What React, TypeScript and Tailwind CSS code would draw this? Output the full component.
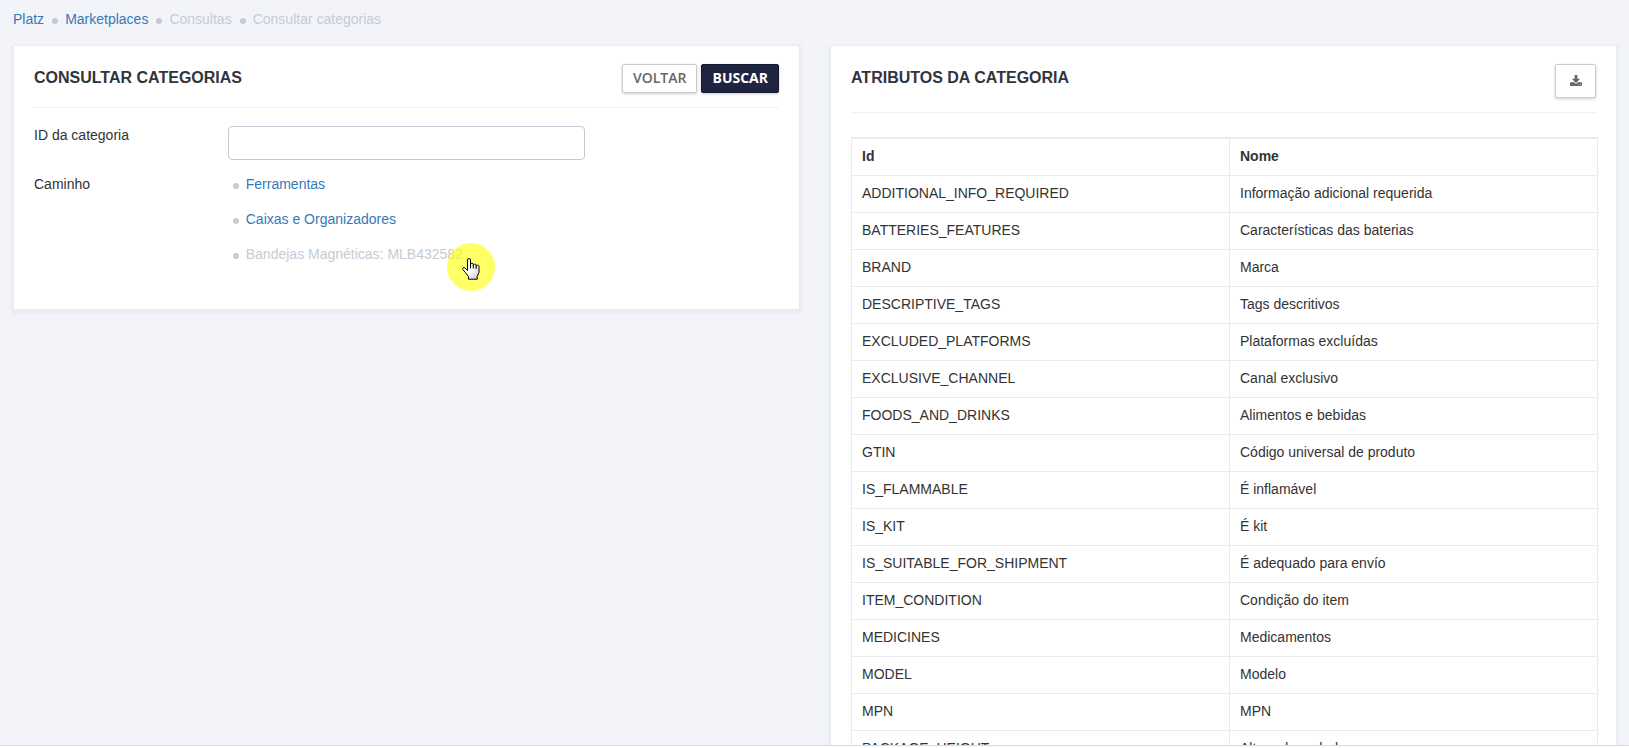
import React from "react";

const attributes: [string, string][] = [
  ["ADDITIONAL_INFO_REQUIRED", "Informação adicional requerida"],
  ["BATTERIES_FEATURES", "Características das baterias"],
  ["BRAND", "Marca"],
  ["DESCRIPTIVE_TAGS", "Tags descritivos"],
  ["EXCLUDED_PLATFORMS", "Plataformas excluídas"],
  ["EXCLUSIVE_CHANNEL", "Canal exclusivo"],
  ["FOODS_AND_DRINKS", "Alimentos e bebidas"],
  ["GTIN", "Código universal de produto"],
  ["IS_FLAMMABLE", "É inflamável"],
  ["IS_KIT", "É kit"],
  ["IS_SUITABLE_FOR_SHIPMENT", "É adequado para envío"],
  ["ITEM_CONDITION", "Condição do item"],
  ["MEDICINES", "Medicamentos"],
  ["MODEL", "Modelo"],
  ["MPN", "MPN"],
  ["PACKAGE_HEIGHT", "Altura da embalagem"],
];

function Dot() {
  return <span aria-hidden="true" className="mt-1 size-1.5 shrink-0 rounded-full bg-[#c5cbd6]" />;
}

function DownloadIcon() {
  return (
    <svg viewBox="0 0 1664 1536" className="h-[11px] w-3 fill-current" aria-hidden="true">
      <path d="M1280 1344q0-26-19-45t-45-19-45 19-19 45 19 45 45 19 45-19 19-45zm256 0q0-26-19-45t-45-19-45 19-19 45 19 45 45 19 45-19 19-45zm128-224v320q0 40-28 68t-68 28H96q-40 0-68-28t-28-68v-320q0-40 28-68t68-28h465l135 136q58 56 136 56t136-56l136-136h464q40 0 68 28t28 68zm-325-569q17 41-14 70l-448 448q-18 19-45 19t-45-19L339 621q-31-29-14-70 17-39 59-39h256V64q0-26 19-45t45-19h256q26 0 45 19t19 45v448h256q42 0 59 39z" />
    </svg>
  );
}

function PointerHighlight() {
  return (
    <span aria-hidden="true" className="pointer-events-none absolute -top-px -right-8 flex size-12 items-center justify-center rounded-full bg-[#ffff00]/60">
      <svg viewBox="0 0 18 22" className="mt-1 h-[22px] w-[18px]">
        <defs>
          <linearGradient id="hand" x1="0" y1="0" x2="1" y2="1">
            <stop offset="0.5" stopColor="#ffffff" />
            <stop offset="1" stopColor="#c8c8c8" />
          </linearGradient>
        </defs>
        <path
          d="M5.5 12.500V2a1.500 1.500 0 0 1 3 0v5V6.700a1.400 1.400 0 0 1 2.800 0v1.100-.3a1.400 1.400 0 0 1 2.800 0v1.300-.3a1.400 1.400 0 0 1 2.900 0v6l-1.800 4v2.700H6.500v-2.500l-3-4L.9 11.600c-.8-1.500.7-2.600 2-1.700z"
          fill="url(#hand)"
          stroke="#000"
          strokeLinejoin="round"
        />
        <path d="M8.500 7v3.500M11.300 7.500v3M14.100 8.500v2.500" stroke="#000" fill="none" />
      </svg>
    </span>
  );
}

const cardClass =
  "min-w-0 flex-1 border border-[#e7ecf1] bg-white px-5 pt-3 shadow-[0_2px_3px_2px_rgba(0,0,0,0.03)]";
const buttonClass =
  "rounded-xs border px-2.5 pb-0.5 font-['Open_Sans',sans-serif] text-sm uppercase shadow-[0_1px_3px_rgba(0,0,0,0.2)]";
const titleClass = "pt-[5px] text-base leading-[18px] font-bold text-[#2f353b]";
const cellClass = "border border-[#e7ecf1] px-2.5 pt-[7px] pb-[9px]";
const headCellClass = "border border-t-2 border-[#e7ecf1] px-2.5 pt-[7px] pb-[9px] font-bold";

export default function App() {
  return (
    <div className="flex h-screen flex-col bg-white font-['Liberation_Sans',Arial,sans-serif] text-sm leading-5 text-[#333]">
      <div className="min-h-0 flex-1 overflow-hidden border-b border-[#d9dadc] bg-[#f3f4f9] pt-[9px] pr-3 pl-[13px]">
        <nav aria-label="Trilha" className="mb-4">
          <ol className="flex items-center gap-2 text-[#c5cbd6]">
            <li><a href="#platz" className="text-[#337ab7]">Platz</a></li>
            <li className="flex items-center gap-[7px]"><Dot /><a href="#marketplaces" className="text-[#337ab7]">Marketplaces</a></li>
            <li className="flex items-center gap-[7px]"><Dot />Consultas</li>
            <li className="flex items-center gap-[7px]"><Dot />Consultar categorias</li>
          </ol>
        </nav>

        <main className="flex items-start gap-[30px]">
          <section className={cardClass + " pb-[45px]"}>
            <header className="flex items-start justify-between border-b border-[#eef1f5] pt-1.5 pb-3.5">
              <h2 className={titleClass}>CONSULTAR CATEGORIAS</h2>
              <div className="flex gap-1">
                <button type="button" className={buttonClass + " h-[29px] border-[#ccc] bg-white font-semibold text-[#666]"}>Voltar</button>
                <button type="button" className={buttonClass + " h-[29px] border-[#14192f] bg-[#1f2541] font-bold text-white"}>Buscar</button>
              </div>
            </header>
            <form className="-mx-[15px] pt-[18px]">
              <div className="grid grid-cols-12">
                <label htmlFor="category-id" className="col-span-3 px-[15px] leading-[18px]">ID da categoria</label>
                <div className="col-span-6 px-[15px]">
                  <input id="category-id" type="text" className="block h-[34px] w-full rounded-sm border border-[#c2cad8] bg-white px-3 outline-none" />
                </div>
              </div>
              <div className="mt-3.5 grid grid-cols-12">
                <span className="col-span-3 px-[15px]">Caminho</span>
                <ul className="col-span-9 flex flex-col items-start gap-[15px] px-5">
                  <li className="flex items-center gap-[7px]"><Dot /><a href="#ferramentas" className="text-[#337ab7]">Ferramentas</a></li>
                  <li className="flex items-center gap-[7px]"><Dot /><a href="#caixas" className="text-[#337ab7]">Caixas e Organizadores</a></li>
                  <li className="relative flex items-center gap-[7px] text-[#c5cbd6]"><Dot />Bandejas Magnéticas: MLB432582<PointerHighlight /></li>
                </ul>
              </div>
            </form>
          </section>

          <section className={cardClass + " pb-5"}>
            <header className="flex items-start justify-between border-b border-[#eef1f5] pt-1.5 pb-3.5">
              <h2 className={titleClass}>ATRIBUTOS DA CATEGORIA</h2>
              <button type="button" aria-label="Baixar" className={buttonClass + " flex h-[34px] w-[41px] items-center justify-center border-[#ccc] bg-white text-[#666]"}>
                <DownloadIcon />
              </button>
            </header>
            <table className="mt-6 w-[calc(100%+2px)] border-collapse border border-t-2 border-[#e7ecf1] text-left">
              <thead>
                <tr>
                  <th className={headCellClass + " w-[378px]"}>Id</th>
                  <th className={headCellClass}>Nome</th>
                </tr>
              </thead>
              <tbody>
                {attributes.map(([id, name]) => (
                  <tr key={id}>
                    <td className={cellClass}>{id}</td>
                    <td className={cellClass}>{name}</td>
                  </tr>
                ))}
              </tbody>
            </table>
          </section>
        </main>
      </div>
      <div className="h-0.5 shrink-0 bg-white" />
    </div>
  );
}
